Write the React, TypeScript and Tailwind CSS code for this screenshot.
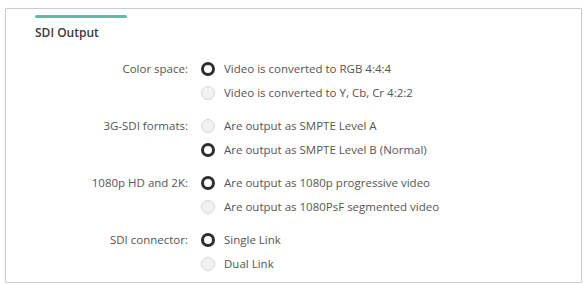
import { useState } from 'react'

interface Group {
  label: string
  options: string[]
}

const GROUPS: Group[] = [
  {
    label: 'Color space:',
    options: ['Video is converted to RGB 4:4:4', 'Video is converted to Y, Cb, Cr 4:2:2'],
  },
  {
    label: '3G-SDI formats:',
    options: ['Are output as SMPTE Level A', 'Are output as SMPTE Level B (Normal)'],
  },
  {
    label: '1080p HD and 2K:',
    options: ['Are output as 1080p progressive video', 'Are output as 1080PsF segmented video'],
  },
  {
    label: 'SDI connector:',
    options: ['Single Link', 'Dual Link'],
  },
]

/** 默认选中项，与截图一致 */
const INITIAL = [0, 1, 0, 0]

function Radio({ checked }: { checked: boolean }) {
  return checked ? (
    <span className="block h-[14px] w-[14px] shrink-0 rounded-full border-[3px] border-[#2e2e2e] bg-white" />
  ) : (
    <span className="block h-[14px] w-[14px] shrink-0 rounded-full border border-[#d6d6d6] bg-[#f1f1f1]" />
  )
}

export default function App() {
  const [picked, setPicked] = useState(INITIAL)

  return (
    <div className="h-[284px] w-[584px] bg-white pl-[5px] pt-[8px] font-['Open_Sans','Noto_Sans',sans-serif]">
      <div className="h-[275px] w-[577px] rounded-[1px] border border-[#cbcbcb] px-[29px] pt-[6px] shadow-[0_0_1px_rgba(0,0,0,0.15)]">
        <div className="h-[3px] w-[92px] rounded-full bg-[#5bbfa6]" />
        <div className="mt-[7px] text-[12px] font-semibold leading-4 text-[#3a3a3a]">SDI Output</div>

        <div className="mt-[16px] flex flex-col gap-[9px]">
          {GROUPS.map((g, gi) => (
            <div key={g.label} className="flex">
              <div className="flex h-6 w-[153px] items-center justify-end text-[11.5px] text-[#555]">
                {g.label}
              </div>
              <div className="ml-[13px] flex flex-col">
                {g.options.map((opt, oi) => (
                  <button
                    key={opt}
                    type="button"
                    onClick={() =>
                      setPicked((prev) => prev.map((v, i) => (i === gi ? oi : v)))
                    }
                    className="flex h-6 items-center gap-[9px] text-left text-[11.5px] text-[#555]"
                  >
                    <Radio checked={picked[gi] === oi} />
                    <span>{opt}</span>
                  </button>
                ))}
              </div>
            </div>
          ))}
        </div>
      </div>
    </div>
  )
}
